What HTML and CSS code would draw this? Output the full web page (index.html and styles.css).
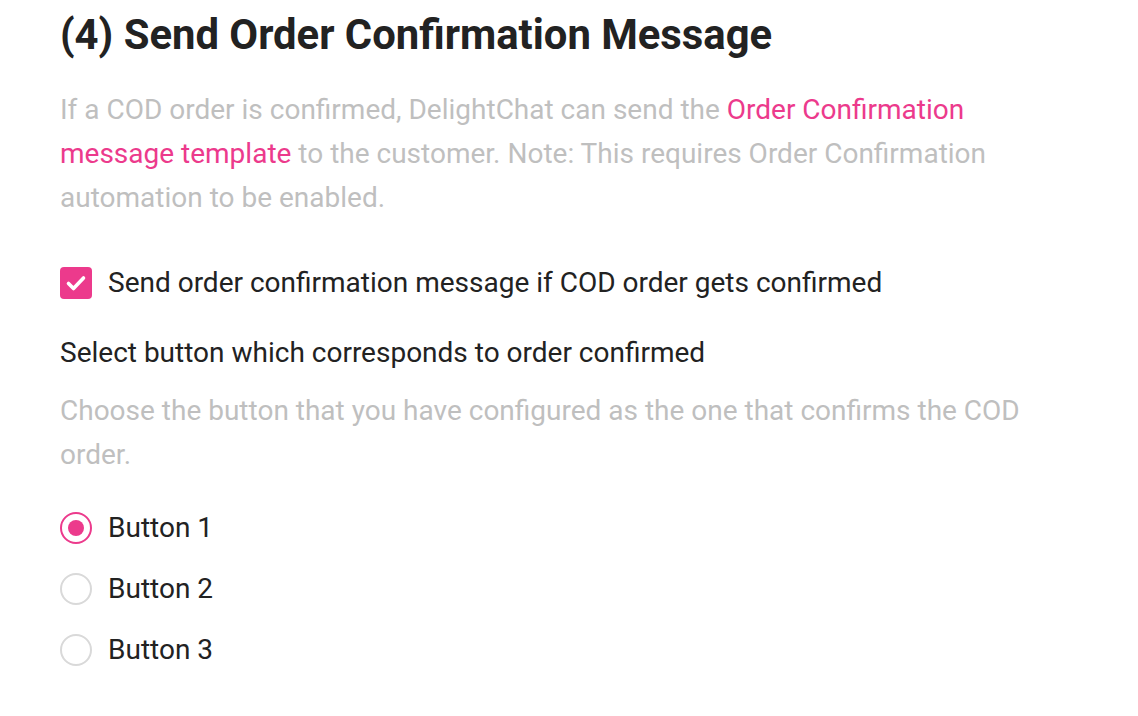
FILE: index.html
```html
<!DOCTYPE html>
<html lang="en">
<head>
  <meta charset="UTF-8" />
  <meta name="viewport" content="width=device-width, initial-scale=1.0"/>
  <title>COD Settings</title>
  <link rel="stylesheet" href="styles.css">
</head>
<body>

  <div class="section">
    <h2>(4) Send Order Confirmation Message</h2>

    <p class="hint">
      If a COD order is confirmed, DelightChat can send the <a href="#">Order Confirmation message template</a> to the customer. Note: This requires Order Confirmation automation to be enabled.
    </p>

    <label class="check">
      <span class="box">
        <svg width="32" height="32" viewBox="0 0 32 32"><path d="M8.5 16.5l5 5 10-10.5" fill="none" stroke="#fff" stroke-width="3.6" stroke-linecap="round" stroke-linejoin="round"/></svg>
      </span>
      Send order confirmation message if COD order gets confirmed
    </label>

    <div class="field-title">Select button which corresponds to order confirmed</div>
    <p class="hint">Choose the button that you have configured as the one that confirms the COD order.</p>

    <div class="radios">
      <label class="radio"><span class="dot selected"></span>Button 1</label>
      <label class="radio"><span class="dot"></span>Button 2</label>
      <label class="radio"><span class="dot"></span>Button 3</label>
    </div>
  </div>

</body>
</html>
```

FILE: styles.css
```css
body {
  font-family: Roboto, "Liberation Sans", sans-serif;
  background-color: #fff;
  margin: 0;
  color: #222;
}
.section {
  width: 980px;
  padding: 10px 60px 0;
}
h2 {
  font-size: 41.8px;
  font-weight: 700;
  line-height: 50px;
  margin: 0 0 28px;
  color: #222;
}
.hint {
  font-size: 28px;
  line-height: 44px;
  color: #bfbfbf;
  margin: 0;
}
.hint a {
  color: #ec3a8c;
  text-decoration: none;
}
.check {
  display: flex;
  align-items: center;
  gap: 16px;
  font-size: 28px;
  line-height: 40px;
  margin-top: 43px;
  color: #222;
}
.box {
  width: 32px;
  height: 32px;
  border-radius: 4px;
  background: #ec3a8c;
  display: flex;
}
.field-title {
  font-size: 28px;
  line-height: 40px;
  margin-top: 30px;
  margin-bottom: 16px;
}
.radios {
  display: flex;
  flex-direction: column;
  gap: 21px;
  margin-top: 31px;
}
.radio {
  display: flex;
  align-items: center;
  gap: 16px;
  font-size: 28px;
  line-height: 40px;
}
.dot {
  width: 32px;
  height: 32px;
  box-sizing: border-box;
  border: 2px solid #d9d9d9;
  border-radius: 50%;
  display: flex;
  align-items: center;
  justify-content: center;
}
.dot.selected {
  border-color: #ec3a8c;
}
.dot.selected::after {
  content: "";
  width: 16px;
  height: 16px;
  border-radius: 50%;
  background: #ec3a8c;
}
```
